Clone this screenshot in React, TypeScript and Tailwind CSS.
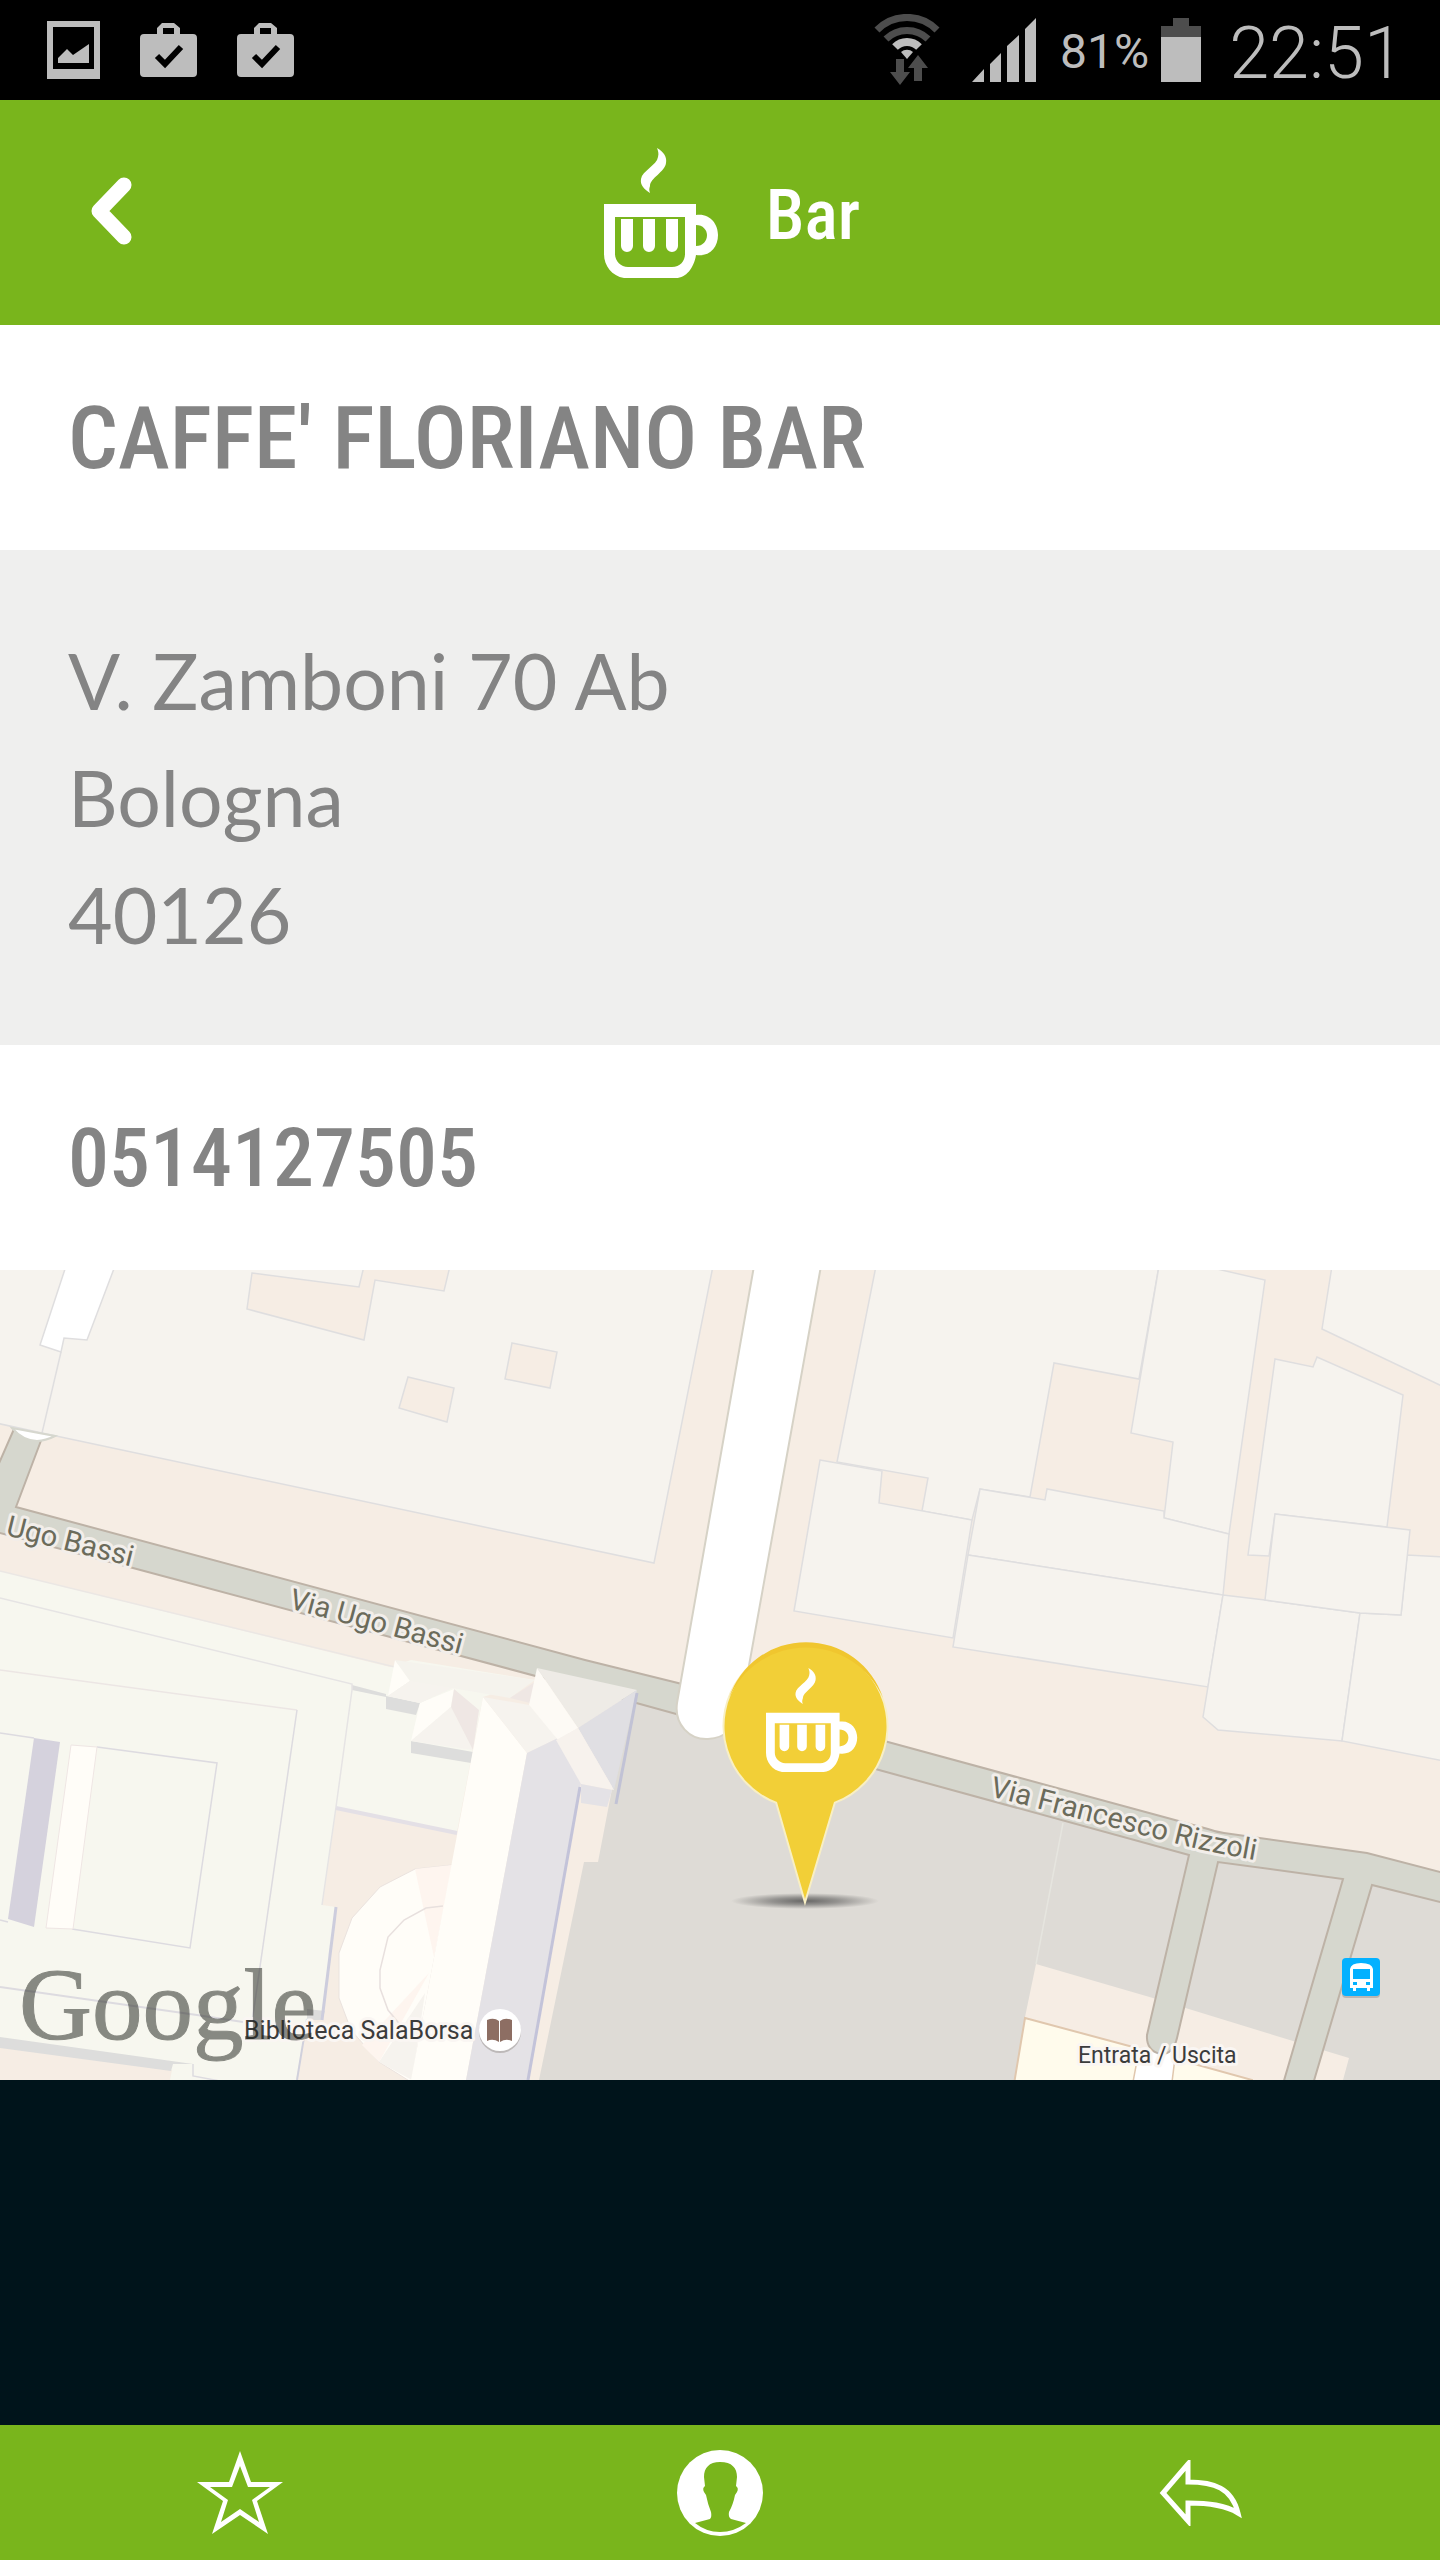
import type { ReactNode } from "react";

const CONDENSED = "font-['Roboto_Condensed','Liberation_Sans_Narrow',sans-serif]";

const place = {
  category: "Bar",
  name: "CAFFE' FLORIANO BAR",
  address: ["V. Zamboni 70 Ab", "Bologna", "40126"],
  phone: "0514127505",
};

function CupShape() {
  return (
    <>
      <path d="M53 0C60 4 63 9 62 15C61 24 46 30 46 38C45 41 45 42 46 45C40 41 36 37 37 31C38 23 53 17 54 9C55 5 54 3 53 0Z" />
      <path
        fillRule="evenodd"
        d="M0 56H92V67C106 65 114 76 114 87C114 99 106 109 92 107C90 120 82 130 72 130H20C8 128 0 118 0 106ZM11 69V106C11 113 17 119 24 119H68C76 119 81 113 81 106V69ZM92 77V98C99 98 103 93 103 87C103 82 99 77 92 77Z"
      />
      <path d="M17 71H29V98A6 6 0 0 1 17 98ZM39 71H51V98A6 6 0 0 1 39 98ZM62 71H74V98A6 6 0 0 1 62 98Z" />
    </>
  );
}

function BagIcon() {
  return (
    <svg viewBox="0 0 57 54" className="w-[57px]" aria-hidden="true">
      <path
        fill="#bdbdbd"
        fillRule="evenodd"
        d="M17 11V5L22 0H34L40 5V11H53Q57 11 57 15V50Q57 54 53 54H4Q0 54 0 50V15Q0 11 4 11ZM23 11H34V5H23Z"
      />
      <path d="M17 33L25 41L41 24" fill="none" stroke="#000" strokeWidth="6" />
    </svg>
  );
}

function StatusBar() {
  return (
    <div className="flex h-[100px] items-center justify-between bg-black pr-9 pl-[47px] font-[Roboto,sans-serif] text-[#bdbdbd]">
      <div className="flex items-center gap-10">
        <svg viewBox="0 0 53 58" className="w-[53px]" aria-hidden="true">
          <path fill="#bdbdbd" fillRule="evenodd" d="M0 0H53V58H0ZM6 6V48H47V6Z" />
          <path fill="#bdbdbd" d="M11 42V37L20 28L26 34L42 23V42Z" />
        </svg>
        <BagIcon />
        <BagIcon />
      </div>

      <div className="flex items-center">
        <svg viewBox="0 0 66 72" className="w-[66px]" aria-hidden="true">
          <g fill="none">
            <path d="M3 16A42 42 0 0 1 63 16" stroke="#4d4d4d" strokeWidth="7" />
            <path d="M12 25A30 30 0 0 1 54 25" stroke="#4d4d4d" strokeWidth="7" />
            <path d="M21 33A17 17 0 0 1 45 33" stroke="#bdbdbd" strokeWidth="8" />
          </g>
          <path d="M33 45L27 38A9 9 0 0 1 39 38Z" fill="#bdbdbd" />
          <path d="M22 45H30V58H36L26 71L16 58H22ZM44 41L54 54H48V67H40V54H34Z" fill="#4d4d4d" />
        </svg>
        <svg viewBox="0 0 64 64" className="ml-8 w-16" aria-hidden="true">
          <path
            fill="#bdbdbd"
            d="M0 64L12 51V64ZM18 64V46L29 35V64ZM35 64V28L47 17V64ZM53 64V11L64 0V64Z"
          />
        </svg>
        <span className="ml-6 pt-1 text-[48px]/[56px]">81%</span>
        <svg viewBox="0 0 40 64" className="ml-3 w-10" aria-hidden="true">
          <path d="M12 0H28V8H40V19H0V8H12Z" fill="#4d4d4d" />
          <path d="M0 19H40V64H0Z" fill="#bdbdbd" />
        </svg>
        <span className="ml-7 pt-2 text-[72px]/[84px] font-light">22:51</span>
      </div>
    </div>
  );
}

function Header() {
  return (
    <header className="grid h-[225px] grid-cols-[1fr_auto_1fr] items-center bg-[#79b51c] text-white">
      <button type="button" aria-label="Back" className="mb-1 ml-[90px] w-11">
        <svg viewBox="0 0 44 68" className="w-11">
          <path
            d="M34 8L9 34L34 60"
            fill="none"
            stroke="#fff"
            strokeWidth="15"
            strokeLinecap="round"
            strokeLinejoin="round"
          />
        </svg>
      </button>
      <div className="flex items-center gap-12 pl-6">
        <svg viewBox="0 0 114 130" className="w-[114px]" fill="#fff" aria-hidden="true">
          <CupShape />
        </svg>
        <h1 className={`${CONDENSED} pt-1 text-[70px]/[84px] font-medium`}>{place.category}</h1>
      </div>
    </header>
  );
}

function Road({ d }: { d: string }) {
  return <path d={d} fill="#d6d7ce" stroke="#bdb2a6" strokeWidth="2" />;
}

const blocks = [
  "-4,-4 713,-4 654,293 42,163 -4,153",
  "876,-4 1159,-4 1139,109 1054,93 1030,227 980,219 972,250 922,241 928,208 837,192",
  "1159,-4 1204,-4 1265,10 1229,264 1164,248 1173,172 1131,163",
  "820,190 882,201 879,233 972,250 953,368 794,341",
  "980,219 1045,230 1047,219 1164,241 1164,248 1229,264 1223,325 968,285",
  "968,285 1223,325 1208,417 953,377",
  "1223,325 1265,330 1360,343 1342,471 1218,460 1203,447",
  "1360,343 1401,345 1407,285 1444,287 1444,491 1342,471",
  "1275,89 1313,97 1317,87 1403,125 1387,257 1275,244 1269,286 1248,285",
  "1275,244 1410,260 1401,345 1360,343 1265,330",
  "1332,-4 1444,-4 1444,117 1322,59",
];

const yards = [
  "252,3 359,17 364,-4 450,-4 444,21 375,10 364,70 247,39",
  "512,73 557,82 550,118 505,109",
  "408,107 454,118 447,152 399,138",
];

function StreetMap({ children }: { children?: ReactNode }) {
  return (
    <svg viewBox="0 0 1440 810" className="block w-full bg-[#f6ede4]" role="img" aria-label="Map">
      <defs>
        <radialGradient id="pin-shadow">
          <stop offset="0" stopColor="#4a4a4a" stopOpacity="0.8" />
          <stop offset="0.45" stopColor="#4a4a4a" stopOpacity="0.5" />
          <stop offset="1" stopColor="#4a4a4a" stopOpacity="0" />
        </radialGradient>
        <path id="rizzoli" d="M989 526L1166 571Q1205 582 1300 598" />
      </defs>

      {/* city blocks and courtyards */}
      <g fill="#f6f3ee" stroke="#dfdedf" strokeWidth="1.5">
        {blocks.map((points) => (
          <polygon key={points} points={points} />
        ))}
      </g>
      <g fill="#f6ede4" stroke="#dfdedf" strokeWidth="1.5">
        {yards.map((points) => (
          <polygon key={points} points={points} />
        ))}
      </g>
      <path d="M66 -4H115L87 70L64 68L61 82L40 75Z" fill="#fff" stroke="#dfdedf" strokeWidth="1.5" />
      <path d="M61 82L42 163" stroke="#dfdedf" strokeWidth="1.5" />

      {/* squares south of the main road */}
      <path d="M630 425L960 515L1190 580L1440 625V810H539L584 592H598Z" fill="#dedbd6" />
      <path d="M1063 553L1036 694" stroke="#e6e5df" strokeWidth="1.5" />
      <path d="M1036 694L1153 728L1293 771L1349 788L1343 810H1015L1025 747Z" fill="#f6ede4" />
      <path d="M1025 748L1133 777L1252 810V814H1014Z" fill="#fffbec" stroke="#e0c7ae" strokeWidth="2" />
      <path d="M1139 780H1176L1172 812H1133Z" fill="#fff" stroke="#e0c7ae" strokeWidth="1.5" />

      {/* roads */}
      <Road d="M-4 200L14 159L42 168L16 237L585 390L678 413L888 472L1208 559Q1216 562 1224 563L1367 583L1444 603V633L1372 615L1313 814H1283L1343 609L1218 592L1177 768Q1173 785 1160 784Q1146 780 1147 765L1189 585L879 500L640 434L133 298L-4 262Z" />
      <path d="M12 158Q30 179 55 166Z" fill="#fff" stroke="#d6d7ce" strokeWidth="2" />
      <path d="M754 -4L677 433C674 455 690 470 708 469C726 468 738 456 741 440L821 -4Z" fill="#fff" stroke="#d6d2c6" strokeWidth="2" />

      {/* library complex */}
      <path
        d="M0 301L390 397L411 390L535 410L483 427L457 562L336 538L322 635L336 637L321 750H307L296 810H170L172 800L0 777Z"
        fill="#f7f7ef"
      />
      <path d="M0 767L193 794H173L171 801L0 778ZM307 739L325 741L322 750H307ZM352 415L386 424V427L352 420ZM386 426L420 433L416 445L386 439ZM411 471L473 482L471 493L411 483Z" fill="#dddddc" />
      <g fill="none" stroke="#dddbe0" strokeWidth="1.5">
        <path d="M0 301L395 397" stroke="#ebe7e4" />
        <path d="M0 328L352 414V420L336 537L322 635" stroke="#e6e4e4" />
        <path d="M0 400L297 440" stroke="#ece6e4" />
        <path d="M297 440L252 752" />
        <path d="M0 463L34 468M0 650L8 652" />
        <path d="M97 477L217 493L190 678L72 659" />
        <path d="M0 717L197 745L243 752" strokeWidth="2" />
        <path d="M193 794V806L220 811" />
        <path d="M307 749L297 810" stroke="#d0d0dc" strokeWidth="2" />
        <path d="M336 637L322 750" stroke="#cdcddd" strokeWidth="3" />
      </g>
      <path d="M336 538L457 563" stroke="#e4e0e6" strokeWidth="4" />
      <path d="M34 468L60 472L34 657L8 649Z" fill="#d5d2dd" />
      <path d="M71 475L97 477L73 659L46 658Z" fill="#fffdf8" stroke="#efe6e4" />

      <path
        d="M452 595L415 599L380 617L352 648L339 683V728L351 760L379 792L411 812Z"
        fill="#fffdf8"
        stroke="#ebe3df"
      />
      <path d="M415 599L452 595L434 687ZM379 792L429 703L362 775Z" fill="#fef5ef" />
      <path d="M379 792L425 723L412 810Z" fill="#f6f3ee" />
      <path d="M443 636L426 638L404 650L388 667L380 700V718L388 740L402 757" fill="none" stroke="#e8e0de" strokeWidth="1.5" />

      <path d="M395 390L410 411L388 426ZM454 419L420 433L411 471L451 437Z" fill="#fffdf8" />
      <path d="M395 390L535 410L510 428L452 418L420 433L388 426L410 411Z" fill="#f5f3ed" />
      <path d="M410 411L452 418L420 433L388 426ZM451 437L473 480L411 471Z" fill="#f6f3ee" />
      <path d="M454 419L479 440L473 480L451 437ZM535 412L510 428L530 433Z" fill="#efe7e4" />

      <path d="M483 427L527 483L466 810H411Z" fill="#fffdf8" />
      <path d="M483 427L529 435L558 468L527 483Z" fill="#f6f3ee" />
      <path d="M527 483L558 468L581 513L528 810H466Z" fill="#e4e2e6" />
      <path d="M580 517L528 810" stroke="#c3c3d9" strokeWidth="3" />
      <path d="M537 398L637 420L578 458Z" fill="#eeebe6" />
      <path d="M537 398L529 435L558 470L578 458Z" fill="#fdfaf5" />
      <path d="M637 420L578 458L614 520Z" fill="#e0dfe3" />
      <path d="M578 458L614 520L581 514L556 470Z" fill="#f7f2ed" />
      <path d="M581 514L612 520L607 537L581 533Z" fill="#e4e2e6" />
      <path d="M637 423L616 534" stroke="#c1c2d5" strokeWidth="3" />

      {/* labels */}
      <g
        fontFamily="Roboto, sans-serif"
        strokeLinejoin="round"
        strokeWidth="6"
        paintOrder="stroke"
        fill="#6b6b5b"
        stroke="#f2eeea"
        fontSize="29"
      >
        <text x="5" y="265" transform="rotate(14 5 265)">Ugo Bassi</text>
        <text x="288" y="338" transform="rotate(15 288 338)">Via Ugo Bassi</text>
        <text>
          <textPath href="#rizzoli">Via Francesco Rizzoli</textPath>
        </text>
        <g fill="#3c3c3c" stroke="#faf6f3">
          <text x="244" y="769" fontSize="25">Biblioteca SalaBorsa</text>
          <text x="1078" y="793" fontSize="23">Entrata / Uscita</text>
        </g>
      </g>
      <text
        x="19"
        y="769"
        fontFamily="'Liberation Serif', serif"
        fontSize="101"
        fill="#22251f"
        stroke="#22251f"
        strokeWidth="1"
        opacity="0.52"
      >
        Google
      </text>

      <circle cx="500" cy="762" r="21" fill="#bdb9b9" />
      <circle cx="500" cy="760" r="21" fill="#fff" />
      <path d="M487 750Q494 747 499 751V772Q493 768 487 771ZM512 750Q505 747 500 751V772Q506 768 512 771Z" fill="#8d6e63" />

      <rect x="1342" y="690" width="38" height="38" rx="4" fill="#b9b6b3" />
      <rect x="1342" y="688" width="38" height="38" rx="4" fill="#03b1ff" />
      <path
        fill="#fff"
        fillRule="evenodd"
        d="M1350 699Q1351 693 1361 693Q1372 693 1373 699V718H1370V721H1367V718H1356V721H1353V718H1350ZM1353 699V709H1370V699ZM1353 712V715H1357V712ZM1366 712V715H1370V712Z"
      />
      {children}
    </svg>
  );
}

function CafePin() {
  return (
    <g>
      <ellipse cx="805" cy="631" rx="74" ry="8" fill="url(#pin-shadow)" />
      <path
        d="M777 532A81 81 0 1 1 834 532L805 629Z"
        fill="#f2cf37"
        stroke="#f8efc4"
        strokeWidth="4"
        paintOrder="stroke"
      />
      <path d="M729 428A81 81 0 0 1 883 428A84 84 0 0 0 729 428Z" fill="#f0c62f" />
      <g transform="translate(766 398) scale(0.8)" fill="#fff">
        <CupShape />
      </g>
    </g>
  );
}

function BottomBar() {
  return (
    <nav className="grid h-[135px] grid-cols-3 items-center justify-items-center bg-[#79b51c]">
      <button type="button" aria-label="Favourite">
        <svg viewBox="0 0 86 83" className="w-[86px]" fill="#fff" fillRule="evenodd">
          <path d="M43 0L54 31H86L60 50L71 83L43 64L15 83L26 50L0 31H32ZM43 15L35 36H13L31 49L24 71L43 58L62 71L55 49L73 36H51Z" />
        </svg>
      </button>
      <button type="button" aria-label="Profile">
        <svg viewBox="0 0 86 86" className="w-[86px]">
          <circle cx="43" cy="43" r="43" fill="#fff" />
          <path
            d="M43 12C32 12 27 18 27 27L28 36Q25 38 27 42L29 45Q31 55 34 62Q35 67 33 69L18 73Q29 82 43 82Q57 82 69 73L54 69Q51 67 52 62Q56 55 58 45L60 42Q62 38 59 36L60 27C60 18 55 12 43 12Z"
            fill="#79b51c"
          />
        </svg>
      </button>
      <button type="button" aria-label="Share">
        <svg viewBox="0 0 83 66" className="w-[83px]">
          <path
            d="M29 4L4 33L29 61V43C50 43 66 45 79 53C73 28 55 22 29 22Z"
            fill="none"
            stroke="#fff"
            strokeWidth="5"
          />
        </svg>
      </button>
    </nav>
  );
}

export default function App() {
  return (
    <div className="flex min-h-screen flex-col bg-[#00141b] text-[#848484]">
      <StatusBar />
      <Header />
      <main>
        <div className="flex h-[225px] items-center bg-white px-[68px]">
          <h2 className={`${CONDENSED} text-[88px]/[96px] font-medium`}>{place.name}</h2>
        </div>
        <address className="bg-[#efefee] px-[68px] py-[72px] font-[Lato,sans-serif] text-[77px]/[117px] not-italic">
          {place.address.map((line) => (
            <p key={line}>{line}</p>
          ))}
        </address>
        <div className="flex h-[225px] items-center bg-white px-[68px]">
          <a href={`tel:${place.phone}`} className={`${CONDENSED} text-[82px]/[96px] font-medium`}>
            {place.phone}
          </a>
        </div>
        <StreetMap>
          <CafePin />
        </StreetMap>
      </main>
      <div className="mt-auto">
        <BottomBar />
      </div>
    </div>
  );
}
